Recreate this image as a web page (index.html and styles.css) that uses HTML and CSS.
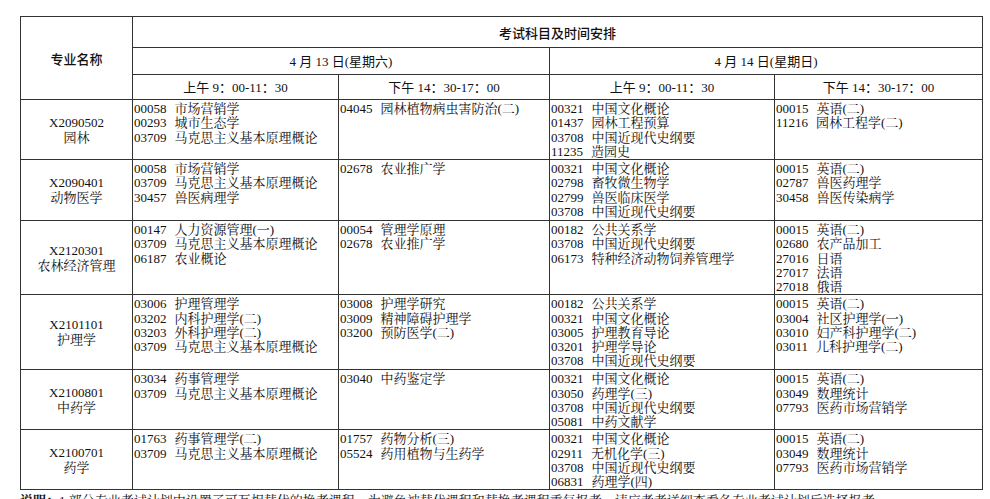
FILE: index.html
```html
<!DOCTYPE html>
<html lang="zh-CN">
<head>
<meta charset="utf-8">
<title>考试科目及时间安排</title>
<link rel="stylesheet" href="styles.css">
</head>
<body>
<div class="page">
<table class="sched">
<colgroup>
<col class="w1"><col class="w2"><col class="w3"><col class="w4"><col class="w5">
</colgroup>
<thead>
<tr class="h1">
<th rowspan="3" class="hd">专业名称</th>
<th colspan="4" class="hd">考试科目及时间安排</th>
</tr>
<tr class="h2">
<th colspan="2" class="dt">4 月 13 日(星期六)</th>
<th colspan="2" class="dt">4 月 14 日(星期日)</th>
</tr>
<tr class="h3">
<th class="tm">上午 9：00-11：30</th>
<th class="tm">下午 14：30-17：00</th>
<th class="tm">上午 9：00-11：30</th>
<th class="tm">下午 14：30-17：00</th>
</tr>
</thead>
<tbody>
<tr class="ra">
<td class="major">X2090502<br>园林</td>
<td><div><span class="c">00058</span>市场营销学</div><div><span class="c">00293</span>城市生态学</div><div><span class="c">03709</span>马克思主义基本原理概论</div></td>
<td><div><span class="c">04045</span>园林植物病虫害防治(二)</div></td>
<td><div><span class="c">00321</span>中国文化概论</div><div><span class="c">01437</span>园林工程预算</div><div><span class="c">03708</span>中国近现代史纲要</div><div><span class="c">11235</span>造园史</div></td>
<td><div><span class="c">00015</span>英语(二)</div><div><span class="c">11216</span>园林工程学(二)</div></td>
</tr>
<tr class="rb">
<td class="major">X2090401<br>动物医学</td>
<td><div><span class="c">00058</span>市场营销学</div><div><span class="c">03709</span>马克思主义基本原理概论</div><div><span class="c">30457</span>兽医病理学</div></td>
<td><div><span class="c">02678</span>农业推广学</div></td>
<td><div><span class="c">00321</span>中国文化概论</div><div><span class="c">02798</span>畜牧微生物学</div><div><span class="c">02799</span>兽医临床医学</div><div><span class="c">03708</span>中国近现代史纲要</div></td>
<td><div><span class="c">00015</span>英语(二)</div><div><span class="c">02787</span>兽医药理学</div><div><span class="c">30458</span>兽医传染病学</div></td>
</tr>
<tr class="rc">
<td class="major">X2120301<br>农林经济管理</td>
<td><div><span class="c">00147</span>人力资源管理(一)</div><div><span class="c">03709</span>马克思主义基本原理概论</div><div><span class="c">06187</span>农业概论</div></td>
<td><div><span class="c">00054</span>管理学原理</div><div><span class="c">02678</span>农业推广学</div></td>
<td><div><span class="c">00182</span>公共关系学</div><div><span class="c">03708</span>中国近现代史纲要</div><div><span class="c">06173</span>特种经济动物饲养管理学</div></td>
<td><div><span class="c">00015</span>英语(二)</div><div><span class="c">02680</span>农产品加工</div><div><span class="c">27016</span>日语</div><div><span class="c">27017</span>法语</div><div><span class="c">27018</span>俄语</div></td>
</tr>
<tr class="rd">
<td class="major">X2101101<br>护理学</td>
<td><div><span class="c">03006</span>护理管理学</div><div><span class="c">03202</span>内科护理学(二)</div><div><span class="c">03203</span>外科护理学(二)</div><div><span class="c">03709</span>马克思主义基本原理概论</div></td>
<td><div><span class="c">03008</span>护理学研究</div><div><span class="c">03009</span>精神障碍护理学</div><div><span class="c">03200</span>预防医学(二)</div></td>
<td><div><span class="c">00182</span>公共关系学</div><div><span class="c">00321</span>中国文化概论</div><div><span class="c">03005</span>护理教育导论</div><div><span class="c">03201</span>护理学导论</div><div><span class="c">03708</span>中国近现代史纲要</div></td>
<td><div><span class="c">00015</span>英语(二)</div><div><span class="c">03004</span>社区护理学(一)</div><div><span class="c">03010</span>妇产科护理学(二)</div><div><span class="c">03011</span>儿科护理学(二)</div></td>
</tr>
<tr class="ra">
<td class="major">X2100801<br>中药学</td>
<td><div><span class="c">03034</span>药事管理学</div><div><span class="c">03709</span>马克思主义基本原理概论</div></td>
<td><div><span class="c">03040</span>中药鉴定学</div></td>
<td><div><span class="c">00321</span>中国文化概论</div><div><span class="c">03050</span>药理学(三)</div><div><span class="c">03708</span>中国近现代史纲要</div><div><span class="c">05081</span>中药文献学</div></td>
<td><div><span class="c">00015</span>英语(二)</div><div><span class="c">03049</span>数理统计</div><div><span class="c">07793</span>医药市场营销学</div></td>
</tr>
<tr class="ra">
<td class="major">X2100701<br>药学</td>
<td><div><span class="c">01763</span>药事管理学(二)</div><div><span class="c">03709</span>马克思主义基本原理概论</div></td>
<td><div><span class="c">01757</span>药物分析(三)</div><div><span class="c">05524</span>药用植物与生药学</div></td>
<td><div><span class="c">00321</span>中国文化概论</div><div><span class="c">02911</span>无机化学(三)</div><div><span class="c">03708</span>中国近现代史纲要</div><div><span class="c">06831</span>药理学(四)</div></td>
<td><div><span class="c">00015</span>英语(二)</div><div><span class="c">03049</span>数理统计</div><div><span class="c">07793</span>医药市场营销学</div></td>
</tr>
</tbody>
</table>
<p class="note"><span class="lbl">说明：</span>1.部分专业考试计划中设置了可互相替代的换考课程，为避免被替代课程和替换考课程重复报考，请应考者详细查看各专业考试计划后选择报考。</p>
</div>
</body>
</html>
```

FILE: styles.css
```css
html, body {
  margin: 0;
  padding: 0;
  background: #fff;
}
body {
  font-family: "Liberation Serif", "Noto Serif CJK SC", "Noto Sans CJK SC", serif;
  font-size: 13px;
  color: #111;
}
.page {
  padding: 16px 0 0 20px;
  height: 499px;
  box-sizing: border-box;
  overflow: hidden;
}
.sched {
  border-collapse: collapse;
  table-layout: fixed;
  width: 962px;
  border: 1px solid #333;
}
.w1 { width: 112px; }
.w2 { width: 206px; }
.w3 { width: 211px; }
.w4 { width: 225px; }
.w5 { width: 208px; }
.sched th, .sched td {
  border: 1px solid #333;
  padding: 0;
}
.sched th {
  font-weight: normal;
  text-align: center;
  vertical-align: middle;
  line-height: 15px;
  font-family: "Liberation Serif", "Noto Sans CJK SC", sans-serif;
}
.sched th.hd {
  font-family: "Noto Sans CJK SC", sans-serif;
  font-weight: 500;
}
.h1 { height: 31px; }
.h2 { height: 27px; }
.h3 { height: 25px; }
.ra { height: 60px; }
.rb { height: 61px; }
.rc { height: 74px; }
.rd { height: 75px; }
.sched td {
  vertical-align: top;
  line-height: 14.25px;
  padding: 2px 0 0 1px;
  white-space: nowrap;
}
.sched td.major {
  text-align: center;
  vertical-align: middle;
  padding: 0;
  line-height: 15px;
}
.c {
  margin-right: 8px;
}
.note {
  margin: 3px 0 0 0;
  line-height: 16px;
  white-space: nowrap;
}
.lbl {
  font-weight: bold;
}
```
